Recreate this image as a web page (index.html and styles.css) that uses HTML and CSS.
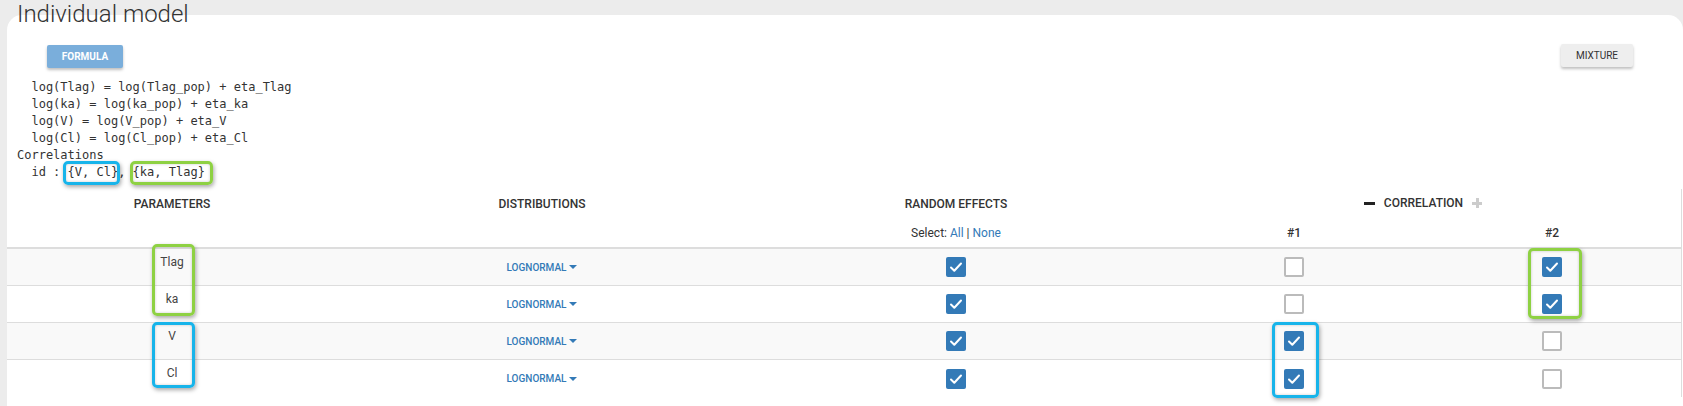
FILE: index.html
```html
<!DOCTYPE html>
<html>
<head>
<meta charset="utf-8">
<title>Individual model</title>
<link rel="stylesheet" href="styles.css">
</head>
<body>
<div class="page">
  <h1 class="title">Individual model</h1>
  <div class="card">
    <div class="toolbar">
      <button class="btn btn-formula">FORMULA</button>
      <button class="btn btn-mixture">MIXTURE</button>
    </div>
<pre class="formula">  log(Tlag) = log(Tlag_pop) + eta_Tlag
  log(ka) = log(ka_pop) + eta_ka
  log(V) = log(V_pop) + eta_V
  log(Cl) = log(Cl_pop) + eta_Cl
Correlations
  id : <span class="mark mark-blue mark-f1">{V, Cl}</span>, <span class="mark mark-green mark-f2">{ka, Tlag}</span></pre>
    <div class="table">
      <div class="thead">
        <div class="grid hrow1">
          <div class="th">PARAMETERS</div>
          <div class="th">DISTRIBUTIONS</div>
          <div class="th">RANDOM EFFECTS</div>
          <div class="th th-corr"><span class="minus"></span>CORRELATION<span class="plus"></span></div>
        </div>
        <div class="grid hrow2">
          <div></div>
          <div></div>
          <div class="sel">Select: <a class="link">All</a> | <a class="link">None</a></div>
          <div class="th">#1</div>
          <div class="th">#2</div>
        </div>
      </div>
      <div class="tbody">
        <div class="grid row odd">
          <div class="name">Tlag</div>
          <div class="cell"><span class="dist">LOGNORMAL<span class="caret"></span></span></div>
          <div class="cell"><span class="cb on"><svg viewBox="0 0 20 20"><path d="M5 10.5l3.3 3.3 6.7-7.3"/></svg></span></div>
          <div class="cell"><span class="cb"></span></div>
          <div class="cell"><span class="cb on"><svg viewBox="0 0 20 20"><path d="M5 10.5l3.3 3.3 6.7-7.3"/></svg></span></div>
        </div>
        <div class="grid row">
          <div class="name">ka</div>
          <div class="cell"><span class="dist">LOGNORMAL<span class="caret"></span></span></div>
          <div class="cell"><span class="cb on"><svg viewBox="0 0 20 20"><path d="M5 10.5l3.3 3.3 6.7-7.3"/></svg></span></div>
          <div class="cell"><span class="cb"></span></div>
          <div class="cell"><span class="cb on"><svg viewBox="0 0 20 20"><path d="M5 10.5l3.3 3.3 6.7-7.3"/></svg></span></div>
        </div>
        <div class="grid row odd">
          <div class="name">V</div>
          <div class="cell"><span class="dist">LOGNORMAL<span class="caret"></span></span></div>
          <div class="cell"><span class="cb on"><svg viewBox="0 0 20 20"><path d="M5 10.5l3.3 3.3 6.7-7.3"/></svg></span></div>
          <div class="cell"><span class="cb on"><svg viewBox="0 0 20 20"><path d="M5 10.5l3.3 3.3 6.7-7.3"/></svg></span></div>
          <div class="cell"><span class="cb"></span></div>
        </div>
        <div class="grid row last">
          <div class="name">Cl</div>
          <div class="cell"><span class="dist">LOGNORMAL<span class="caret"></span></span></div>
          <div class="cell"><span class="cb on"><svg viewBox="0 0 20 20"><path d="M5 10.5l3.3 3.3 6.7-7.3"/></svg></span></div>
          <div class="cell"><span class="cb on"><svg viewBox="0 0 20 20"><path d="M5 10.5l3.3 3.3 6.7-7.3"/></svg></span></div>
          <div class="cell"><span class="cb"></span></div>
        </div>
        <div class="anno anno-green anno-names1"></div>
        <div class="anno anno-blue anno-names2"></div>
        <div class="anno anno-blue anno-c1"></div>
        <div class="anno anno-green anno-c2"></div>
      </div>
    </div>
  </div>
</div>
</body>
</html>
```
FILE: styles.css
```css
* { box-sizing: border-box; }
html, body { margin: 0; padding: 0; }
body {
  background: #ececec;
  font-family: Roboto, "Liberation Sans", sans-serif;
  color: #333;
  height: 406px;
  overflow: hidden;
}
.page { padding-left: 7px; }
.title {
  position: relative;
  z-index: 1;
  margin: 0;
  padding-left: 10px;
  font-size: 24px;
  font-weight: 300;
  line-height: 28px;
  color: #333;
}
.card {
  margin-top: -13px;
  background: #fff;
  border-radius: 15px 15px 0 0;
  padding-top: 29px;
  height: 391px;
  overflow: hidden;
}
.toolbar {
  display: flex;
  justify-content: space-between;
  align-items: flex-start;
  padding: 0 50px 0 40px;
}
.btn {
  border: 0;
  border-radius: 2px;
  height: 23px;
  font-family: Roboto, "Liberation Sans", sans-serif;
  font-size: 10px;
  line-height: 23px;
  padding: 0;
  box-shadow: 0 2px 3px rgba(0,0,0,0.25);
}
.btn-formula {
  margin-top: 1px;
  width: 76px;
  background: #7aaedb;
  color: #fff;
  font-weight: 700;
}
.btn-mixture {
  width: 72px;
  background: #eeeeee;
  color: #333;
  font-weight: 400;
}
.formula {
  margin: 11px 0 0 0;
  padding-left: 10px;
  font-family: "DejaVu Sans Mono", "Liberation Mono", monospace;
  font-size: 12px;
  line-height: 17px;
  color: #333;
  height: 102px;
}
.mark { position: relative; }
.mark::after {
  content: "";
  position: absolute;
  border: 3px solid;
  border-radius: 5px;
  box-shadow: 1px 2px 4px rgba(0,0,0,0.35), inset 0 0 3px rgba(0,0,0,0.2);
}
.mark-blue::after { border-color: #17b4ea; }
.mark-green::after { border-color: #8ed143; }
.mark-f1::after { left: -5px; right: -2px; top: -4px; bottom: -6px; }
.mark-f2::after { left: -3px; right: -8px; top: -4px; bottom: -6px; }

.table {
  margin-top: 8px;
  width: 1675px;
  border-right: 1px solid #ddd;
}
.grid {
  display: grid;
  grid-template-columns: 330px 410px 418px 258px 258px;
}
.thead { border-bottom: 2px solid #ddd; }
.hrow1 { height: 30px; align-items: center; }
.hrow2 { height: 28px; align-items: center; }
.th {
  text-align: center;
  font-size: 12px;
  font-weight: 500;
  color: #333;
}
.th-corr {
  grid-column: span 2;
  display: flex;
  justify-content: center;
  align-items: center;
  margin-top: -2px;
}
.minus {
  width: 11px;
  height: 3px;
  background: #222;
  margin-right: 9px;
}
.plus {
  width: 10px;
  height: 10px;
  margin-left: 9px;
  background:
    linear-gradient(#ccc, #ccc) center / 10px 3px no-repeat,
    linear-gradient(#ccc, #ccc) center / 3px 10px no-repeat;
}
.sel {
  text-align: center;
  font-size: 12px;
  color: #333;
}
.link { color: #337ab7; text-decoration: none; }

.tbody { position: relative; }
.row {
  height: 37px;
  border-bottom: 1px solid #ddd;
  background: #fff;
}
.row.odd { background: #f9f9f9; }
.row.last { border-bottom: 0; }
.name {
  text-align: center;
  font-size: 12px;
  padding-top: 6px;
  color: #444;
}
.cell {
  display: flex;
  align-items: center;
  justify-content: center;
}
.dist {
  display: inline-flex;
  align-items: center;
  font-size: 10px;
  font-weight: 500;
  color: #337ab7;
}
.caret {
  margin-left: 3px;
  width: 0;
  height: 0;
  border-left: 4px solid transparent;
  border-right: 4px solid transparent;
  border-top: 4px solid #337ab7;
}
.cb {
  display: block;
  width: 20px;
  height: 20px;
  border-radius: 2px;
  border: 2px solid #bbb;
  background: #fff;
}
.cb.on {
  border: 0;
  background: #337ab7;
}
.cb svg { display: block; width: 20px; height: 20px; }
.cb path { fill: none; stroke: #fff; stroke-width: 2; stroke-linecap: round; stroke-linejoin: round; }

.anno {
  position: absolute;
  border: 3px solid;
  border-radius: 5px;
  box-shadow: 1px 2px 4px rgba(0,0,0,0.35), inset 0 0 3px rgba(0,0,0,0.2);
}
.anno-blue { border-color: #17b4ea; }
.anno-green { border-color: #8ed143; }
.anno-names1 { left: 145px; top: -5px; width: 43px; height: 72px; }
.anno-names2 { left: 145px; top: 73px; width: 43px; height: 66px; }
.anno-c1 { left: 1265px; top: 73px; width: 47px; height: 76px; }
.anno-c2 { left: 1521px; top: -1px; width: 54px; height: 71px; }
```
